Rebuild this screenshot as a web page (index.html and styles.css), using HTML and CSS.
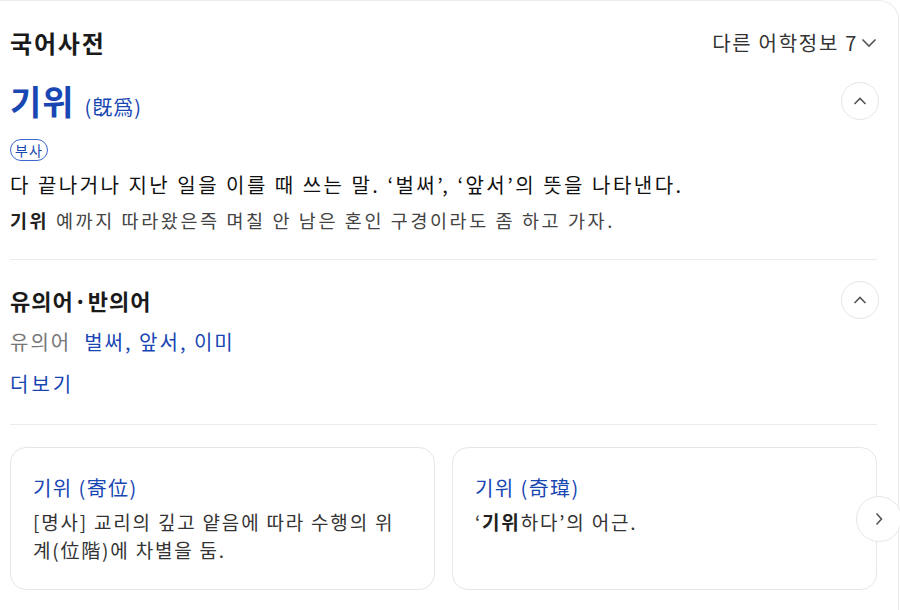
FILE: index.html
```
<!DOCTYPE html>
<html>
<head>
    <meta charset="utf-8" />
    <title>국어사전</title>
    <link rel="stylesheet" href="styles.css">
</head>
<body>
    <div class="panel">
        <div class="head">
            <h2 class="title">국어사전</h2>
            <a class="more-info">다른 어학정보 7
                <svg class="chev-down" width="16" height="10" viewBox="0 0 16 10"><polyline points="1.5,1.5 8,8 14.5,1.5" /></svg>
            </a>
        </div>

        <div class="section">
            <div class="word-row">
                <div class="word"><strong>기위</strong><span class="hanja">(旣爲)</span></div>
                <button class="circle-btn">
                    <svg width="16" height="10" viewBox="0 0 16 10"><polyline points="2.5,8 8,2.5 13.5,8" /></svg>
                </button>
            </div>
            <span class="badge">부사</span>
            <p class="mean">다 끝나거나 지난 일을 이를 때 쓰는 말. ‘벌써’, ‘앞서’의 뜻을 나타낸다.</p>
            <p class="example"><b>기위</b> 예까지 따라왔은즉 며칠 안 남은 혼인 구경이라도 좀 하고 가자.</p>
        </div>

        <div class="section section2">
            <div class="word-row sub-row">
                <h3 class="sub-title">유의어·반의어</h3>
                <button class="circle-btn">
                    <svg width="16" height="10" viewBox="0 0 16 10"><polyline points="2.5,8 8,2.5 13.5,8" /></svg>
                </button>
            </div>
            <p class="syn"><span class="syn-label">유의어</span><a>벌써</a>, <a>앞서</a>, <a>이미</a></p>
            <a class="more-link">더보기</a>
        </div>

        <div class="cards">
            <div class="card">
                <div class="card-title">기위 (寄位)</div>
                <p class="card-text">[명사] 교리의 깊고 얕음에 따라 수행의 위계(位階)에 차별을 둠.</p>
            </div>
            <div class="card">
                <div class="card-title">기위 (奇瑋)</div>
                <p class="card-text">‘<b>기위</b>하다’의 어근.</p>
            </div>
            <button class="next-btn">
                <svg width="10" height="16" viewBox="0 0 10 16"><polyline points="2.5,2.5 7.5,8 2.5,13.5" /></svg>
            </button>
        </div>
    </div>
</body>
</html>
```

FILE: styles.css
```
* {
    margin: 0;
    padding: 0;
    box-sizing: border-box;
}

body {
    font-family: "Noto Sans CJK KR", "Noto Sans", sans-serif;
    color: #222;
    background: #fff;
    overflow: hidden;
}

a {
    cursor: pointer;
}

.panel {
    margin-left: -20px;
    margin-right: 1px;
    padding: 28px 21px 40px 30px;
    border: 1px solid #ebebeb;
    border-left: none;
    border-radius: 0 20px 0 0;
    height: 640px;
}

.head {
    display: flex;
    justify-content: space-between;
    align-items: center;
    height: 28px;
}

.title {
    font-size: 24px;
    font-weight: 700;
    line-height: 28px;
    letter-spacing: 1.8px;
    color: #1a1a1a;
}

.more-info {
    display: flex;
    align-items: center;
    gap: 3px;
    font-size: 20px;
    letter-spacing: 1.7px;
    color: #333;
    line-height: 28px;
}

.chev-down polyline,
.circle-btn polyline,
.next-btn polyline {
    fill: none;
    stroke: #555;
    stroke-width: 1.6;
}

.section {
    padding-bottom: 25px;
    border-bottom: 1px solid #ebebeb;
}

.word-row {
    display: flex;
    justify-content: space-between;
    align-items: center;
    height: 40px;
    margin-top: 24px;
}

.word strong {
    font-size: 34px;
    font-weight: 700;
    letter-spacing: 1px;
    color: #1846b3;
    line-height: 40px;
}

.hanja {
    margin-left: 10px;
    font-size: 20px;
    letter-spacing: 1px;
    color: #1846b3;
}

.circle-btn {
    width: 38px;
    height: 38px;
    border-radius: 50%;
    border: 1px solid #e6e6e6;
    background: #fff;
    display: flex;
    align-items: center;
    justify-content: center;
    margin-right: -2px;
}

.badge {
    display: inline-block;
    margin-top: 18px;
    height: 22px;
    padding: 0 4px;
    border: 1px solid #3a66d0;
    border-radius: 11px;
    font-size: 14px;
    letter-spacing: 1px;
    line-height: 20px;
    color: #1846b3;
}

.mean {
    margin-top: 9px;
    font-size: 20px;
    letter-spacing: 2.5px;
    line-height: 30px;
    color: #111;
}

.example {
    margin-top: 6px;
    font-size: 18.5px;
    letter-spacing: 2.6px;
    line-height: 28px;
    color: #444;
}

.example b {
    color: #222;
}

.section2 {
    padding-bottom: 25px;
}

.sub-row {
    margin-top: 21px;
    height: 38px;
}

.sub-title {
    font-size: 22px;
    font-weight: 700;
    letter-spacing: 1px;
    line-height: 28px;
    color: #1a1a1a;
}

.syn {
    margin-top: 8px;
    font-size: 20px;
    letter-spacing: 2px;
    line-height: 30px;
    color: #1846b3;
}

.syn-label {
    color: #777;
    margin-right: 13px;
}

.syn a {
    color: #1846b3;
}

.more-link {
    display: block;
    margin-top: 12px;
    font-size: 20px;
    letter-spacing: 3px;
    line-height: 30px;
    color: #1846b3;
}

.cards {
    display: flex;
    gap: 17px;
    margin-top: 22px;
    position: relative;
}

.card {
    width: 425px;
    height: 143px;
    border: 1px solid #e6e6e6;
    border-radius: 16px;
    padding: 26px 22px 0 22px;
}

.card-title {
    font-size: 20px;
    letter-spacing: 1.4px;
    line-height: 28px;
    color: #1846b3;
}

.card-text {
    margin-top: 6px;
    font-size: 19px;
    letter-spacing: 1.8px;
    line-height: 28px;
    color: #333;
}

.card-text b {
    color: #222;
}

.next-btn {
    position: absolute;
    left: 846px;
    top: 49px;
    width: 46px;
    height: 46px;
    border-radius: 50%;
    border: 1px solid #e6e6e6;
    background: #fff;
    display: flex;
    align-items: center;
    justify-content: center;
}
```
